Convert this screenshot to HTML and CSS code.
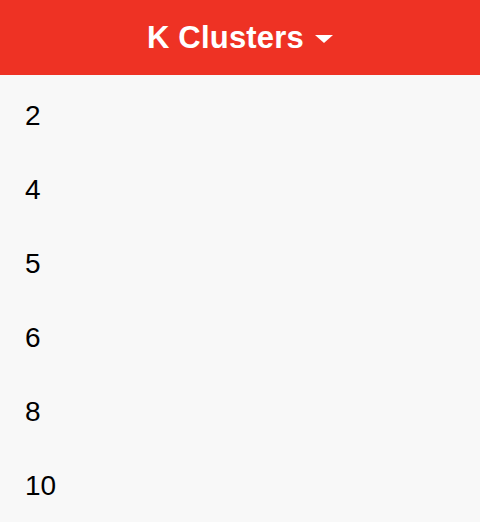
FILE: index.html
```html
<!DOCTYPE html>
<html>
<head>
<meta charset="utf-8">
<link rel="stylesheet" href="styles.css">
</head>
<body>
<header class="bar">
  <span class="title">K Clusters</span>
  <svg class="caret" width="18" height="8" viewBox="0 0 18 8"><path d="M0 0H18L9 8Z" fill="#fff"/></svg>
</header>
<ul class="list">
  <li>2</li>
  <li>4</li>
  <li>5</li>
  <li>6</li>
  <li>8</li>
  <li>10</li>
</ul>
</body>
</html>
```
FILE: styles.css
```css
html, body {
  margin: 0;
  padding: 0;
  background: #f8f8f8;
  font-family: "Liberation Sans", Arial, sans-serif;
}
.bar {
  height: 75px;
  background: #ee3224;
  display: flex;
  align-items: center;
  justify-content: center;
  gap: 11px;
}
.title {
  color: #fff;
  font-weight: bold;
  font-size: 31px;
  letter-spacing: 0.2px;
}
.caret {
  display: block;
  margin-top: 3px;
}
.list {
  list-style: none;
  margin: 0;
  padding: 0;
}
.list li {
  box-sizing: border-box;
  height: 74px;
  padding-top: 8px;
  display: flex;
  align-items: center;
  padding-left: 25px;
  font-size: 28px;
  color: #000;
}
```
